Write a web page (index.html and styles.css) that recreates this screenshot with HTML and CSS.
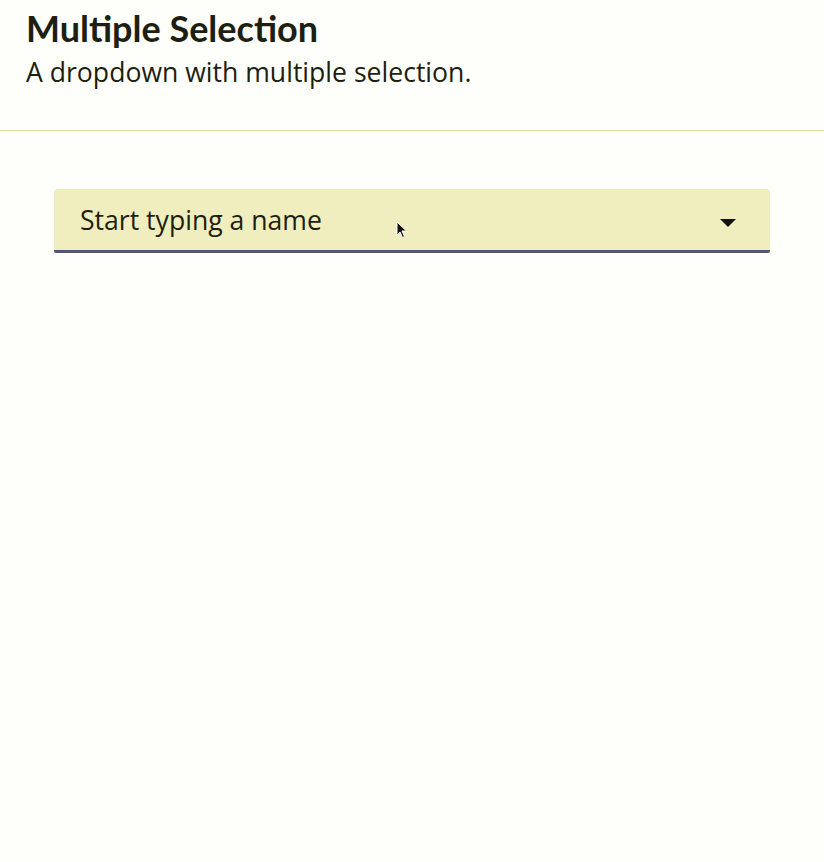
FILE: index.html
```html
<!DOCTYPE html>
<html>
<head>
<meta charset="utf-8">
<link rel="stylesheet" href="styles.css">
</head>
<body>
<header class="header">
  <h1 class="title">Multiple Selection</h1>
  <p class="subtitle">A dropdown with multiple selection.</p>
</header>
<main class="content">
  <div class="field">
    <span class="placeholder">Start typing a name</span>
    <svg class="caret" width="16" height="8" viewBox="0 0 16 8"><path d="M0 0 L16 0 L8 8 Z" fill="#111"/></svg>
    <svg class="pointer" width="12" height="18" viewBox="0 0 12 18"><path d="M1 1 L1 14 L4 11 L6.5 16.5 L8.5 15.5 L6 10 L10.5 10 Z" fill="#111" stroke="#fff" stroke-width="1"/></svg>
  </div>
</main>
</body>
</html>
```
FILE: styles.css
```css
html, body {
  margin: 0;
  padding: 0;
  background: #fefefa;
}
body {
  width: 824px;
  height: 862px;
  overflow: hidden;
}
.header {
  padding: 6px 26px 0 26px;
  height: 124px;
  border-bottom: 1px solid #e2dfa6;
}
.title {
  margin: 0;
  font-family: Lato, sans-serif;
  font-weight: 700;
  font-size: 36px;
  line-height: 44px;
  color: #1d1f10;
}
.subtitle {
  margin: 4px 0 0 0;
  font-family: "Open Sans", sans-serif;
  font-size: 26.6px;
  line-height: 36px;
  color: #1d1f10;
}
.content {
  padding: 58px 54px 0 54px;
}
.field {
  position: relative;
  display: flex;
  align-items: center;
  justify-content: space-between;
  height: 61px;
  padding: 0 34px 0 26px;
  background: #f0eebf;
  border-bottom: 3px solid #525772;
  border-radius: 4px 4px 2px 2px;
}
.placeholder {
  font-family: "Open Sans", sans-serif;
  font-size: 26.6px;
  color: #1d1f10;
}
.caret {
  display: block;
  margin-top: 6px;
}
.pointer {
  position: absolute;
  left: 342px;
  top: 32px;
}
```
